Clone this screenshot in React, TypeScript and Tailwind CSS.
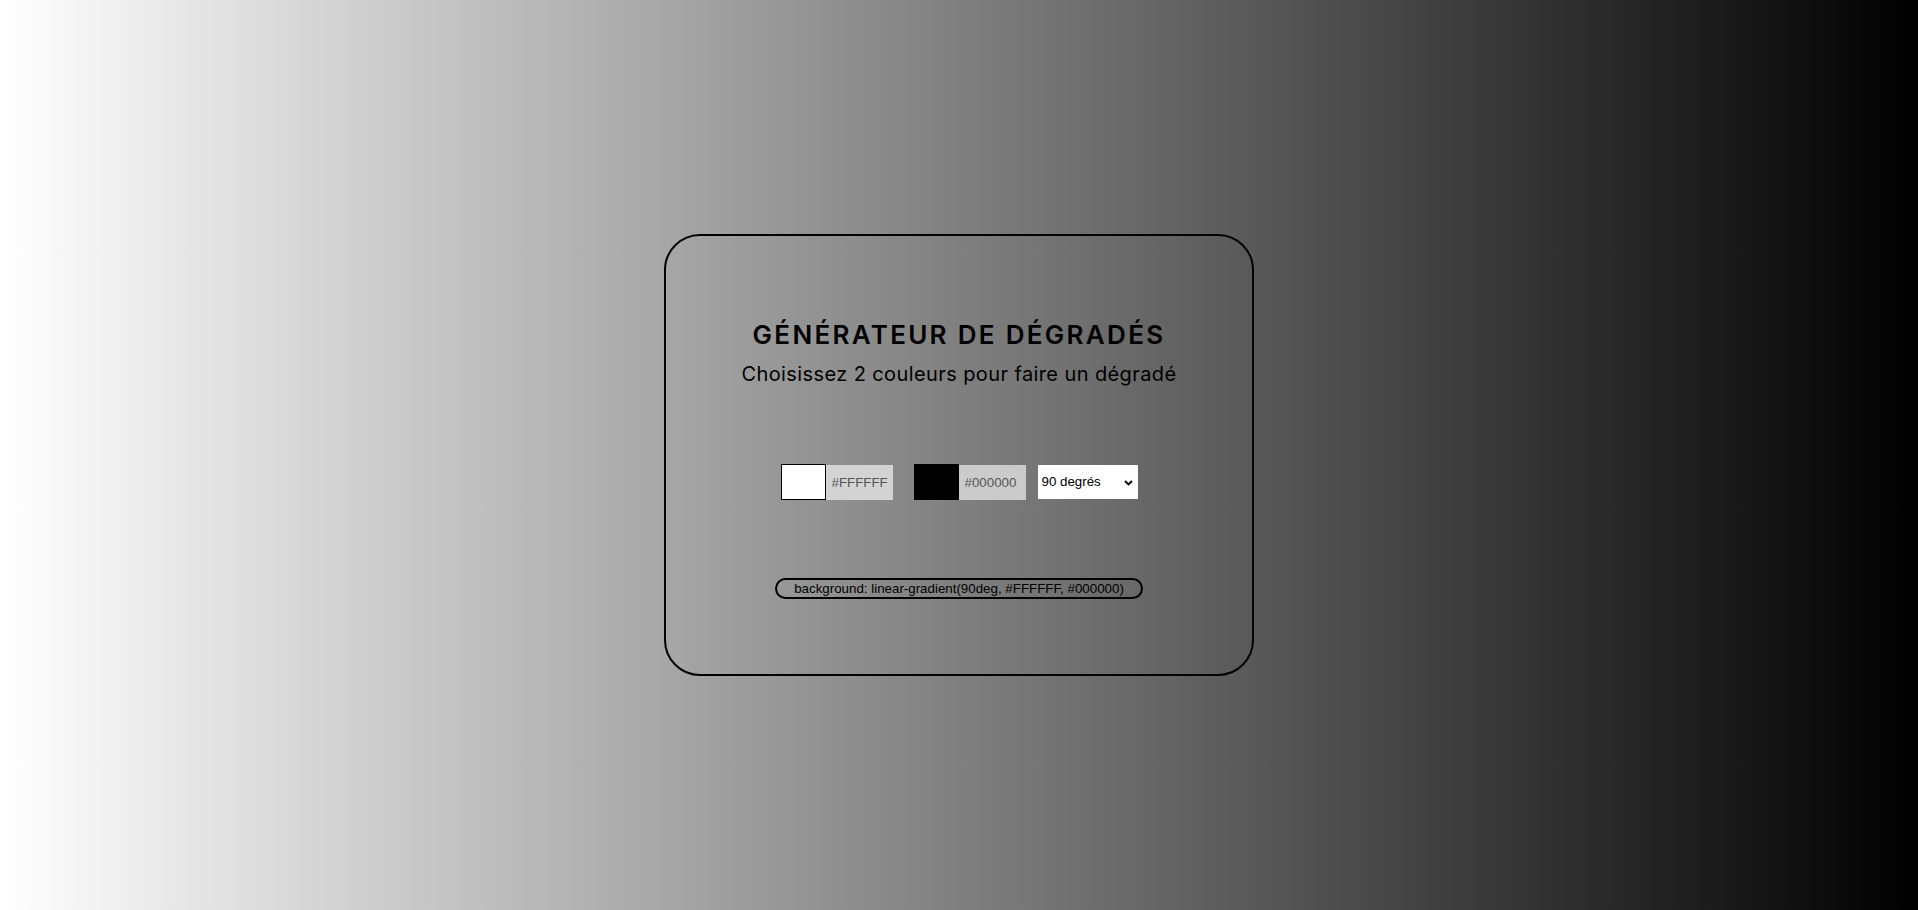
import { useState } from 'react';

const ANGLES = [0, 45, 90, 135, 180, 225, 270, 315];

function ColorField({ value, onChange, boxBg }: { value: string; onChange: (v: string) => void; boxBg: string }) {
  return (
    <div className="flex items-center">
      <div className="w-[45px] h-[36px] border border-black" style={{ backgroundColor: value }} />
      <input
        className={'w-[67px] h-[35px] pl-[6px] text-[13.33px] text-[#555] outline-none ' + boxBg}
        style={{ fontFamily: '"Liberation Sans", Arial, sans-serif' }}
        value={value}
        onChange={e => onChange(e.target.value)}
      />
    </div>
  );
}

export default function App() {
  const [c1, setC1] = useState('#FFFFFF');
  const [c2, setC2] = useState('#000000');
  const [angle, setAngle] = useState(90);

  const css = `linear-gradient(${angle}deg, ${c1}, ${c2})`;

  return (
    <div className="w-full h-[910px] flex items-center justify-center" style={{ background: css }}>
      {/* Carte */}
      <div className="w-[590px] h-[442px] border-2 border-black rounded-[36px] flex flex-col items-center">
        <h1 className="mt-[81px] text-[26px] leading-[36px] tracking-[2.3px] font-semibold text-black" style={{ fontFamily: 'Inter, "Noto Sans", sans-serif' }}>
          GÉNÉRATEUR DE DÉGRADÉS
        </h1>
        <p className="mt-[7px] text-[20px] leading-[28px] tracking-[0.4px] text-black" style={{ fontFamily: 'Inter, "Noto Sans", sans-serif' }}>
          Choisissez 2 couleurs pour faire un dégradé
        </p>

        {/* Couleurs */}
        <div className="mt-[76px] flex items-center">
          <ColorField value={c1} onChange={setC1} boxBg="bg-[#d3d3d3]" />
          <div className="w-[21px]" />
          <ColorField value={c2} onChange={setC2} boxBg="bg-[#cbcbcb]" />
          <div className="w-[12px]" />
          <div className="relative">
            <select
              className="appearance-none w-[100px] h-[34px] bg-white pl-[4px] text-[13.33px] text-black outline-none"
              style={{ fontFamily: '"Liberation Sans", Arial, sans-serif' }}
              value={angle}
              onChange={e => setAngle(Number(e.target.value))}
            >
              {ANGLES.map(a => <option key={a} value={a}>{a} degrés</option>)}
            </select>
            <svg className="absolute right-[5px] top-[15px] w-[9px] h-[6px] pointer-events-none" viewBox="0 0 9 6" fill="none" stroke="black" strokeWidth={1.8}>
              <path d="M1 1l3.5 3.5L8 1" />
            </svg>
          </div>
        </div>

        {/* Code */}
        <div
          className="mt-[78px] h-[21px] px-[17px] border-2 border-black rounded-full flex items-center text-[13.33px] text-black"
          style={{ fontFamily: '"Liberation Sans", Arial, sans-serif' }}
        >
          background: {css}
        </div>
      </div>
    </div>
  );
}
